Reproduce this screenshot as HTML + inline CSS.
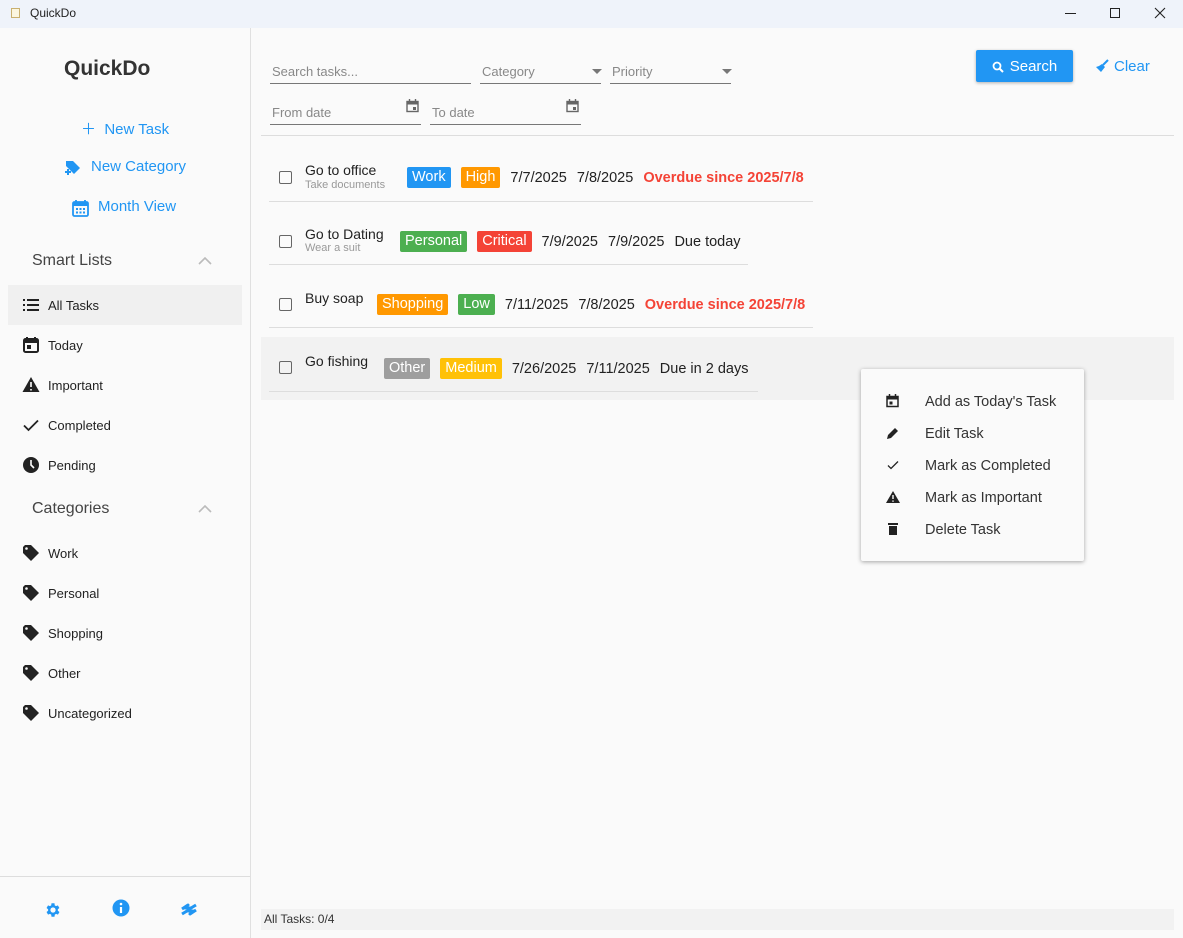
<!DOCTYPE html>
<html><head><meta charset="utf-8"><style>
*{box-sizing:border-box;margin:0;padding:0}
body{width:1183px;height:938px;overflow:hidden;background:#fafafa;font-family:"Liberation Sans","Noto Sans CJK SC",sans-serif;color:#222;position:relative}
.abs{position:absolute}
.tb{left:0;top:0;width:1183px;height:28px;background:#eff3fa}
.side{left:0;top:28px;width:251px;height:910px;border-right:1px solid #e0e0e0}
.blue{color:#2196f3}
.nav{font-size:13px;display:flex;align-items:center;gap:8px;left:22px;color:#222}
.nav svg{width:18px;height:18px}
.sec{font-size:16px;color:#444;left:32px}
.chev{left:198px;width:14px;height:8px}
.field{border-bottom:1px solid #777;font-size:13px;color:#888;height:20px;padding-left:2px}
.tag{display:inline-block;color:#fff;font-size:14.5px;padding:1px 5px;border-radius:2px;line-height:19px}
.row{font-size:14.5px;display:flex;align-items:center}
.cb{width:13px;height:13px;border:1.5px solid #666;border-radius:2px}
.menu{left:861px;top:369px;width:223px;height:192px;background:#fafafa;box-shadow:0 1px 4px rgba(0,0,0,.35);border-radius:2px}
.mi{position:absolute;left:64px;font-size:14.5px;color:#333}
.mic{position:absolute;left:25px;width:14px;height:14px}
</style></head><body>
<div class="abs tb">
 <div class="abs" style="left:11px;top:8px;width:9px;height:10px;border:1px solid #c9b070;background:#fbf6e0"></div>
 <div class="abs" style="left:30px;top:6px;font-size:12px">QuickDo</div>
 <div class="abs" style="left:1065px;top:13px;width:11px;height:1px;background:#222"></div>
 <div class="abs" style="left:1110px;top:8px;width:10px;height:10px;border:1px solid #222"></div>
 <svg class="abs" style="left:1154px;top:7px" width="12" height="12"><path d="M1 1L11 11M11 1L1 11" stroke="#222" stroke-width="1.1"/></svg>
</div>
<div class="abs side"></div>
<div class="abs" style="left:64px;top:57px;font-size:21px;font-weight:bold;color:#333">QuickDo</div>
<div class="abs blue" style="left:81px;top:118px;font-size:15px">＋&nbsp; New Task</div>
<svg class="abs" style="left:64px;top:159px" width="18" height="18"><path d="M2 2h7l7 7-6 6-8-8z" fill="#2196f3"/><path d="M1 13h6M4 10v6" stroke="#2196f3" stroke-width="2"/></svg>
<div class="abs blue" style="left:91px;top:158px;font-size:15px">New Category</div>
<svg class="abs" style="left:72px;top:199px" width="17" height="18"><rect x="1" y="3" width="15" height="14" rx="1.5" fill="none" stroke="#2196f3" stroke-width="1.8"/><rect x="1" y="3" width="15" height="4" fill="#2196f3"/><path d="M4 1v4M13 1v4" stroke="#2196f3" stroke-width="1.8"/><g fill="#2196f3"><rect x="4" y="9" width="2" height="2"/><rect x="7.5" y="9" width="2" height="2"/><rect x="11" y="9" width="2" height="2"/><rect x="4" y="12.5" width="2" height="2"/><rect x="7.5" y="12.5" width="2" height="2"/><rect x="11" y="12.5" width="2" height="2"/></g></svg>
<div class="abs blue" style="left:98px;top:198px;font-size:15px">Month View</div>
<div class="abs sec" style="top:252px">Smart Lists</div>
<svg class="abs chev" style="top:257px"><path d="M1 7L7 1L13 7" stroke="#bbb" stroke-width="1.6" fill="none"/></svg>
<div class="abs" style="left:8px;top:285px;width:234px;height:40px;background:#f0f0f0"></div>
<div class="abs nav" style="top:296px"><svg viewBox="0 0 18 18"><g fill="#222"><rect x="1" y="3" width="2" height="2"/><rect x="1" y="8" width="2" height="2"/><rect x="1" y="13" width="2" height="2"/><rect x="5" y="3" width="12" height="2"/><rect x="5" y="8" width="12" height="2"/><rect x="5" y="13" width="12" height="2"/></g></svg>All Tasks</div>
<div class="abs nav" style="top:336px"><svg viewBox="0 0 18 18"><rect x="2" y="3" width="14" height="13" rx="1.5" fill="none" stroke="#222" stroke-width="2"/><rect x="2" y="3" width="14" height="4" fill="#222"/><path d="M5 1v3M13 1v3" stroke="#222" stroke-width="2"/><rect x="5" y="9" width="4" height="4" fill="#222"/></svg>Today</div>
<div class="abs nav" style="top:376px"><svg viewBox="0 0 18 18"><path d="M9 1L17.5 16H.5z" fill="#222"/><path d="M9 6v5M9 13v1.5" stroke="#fff" stroke-width="1.6"/></svg>Important</div>
<div class="abs nav" style="top:416px"><svg viewBox="0 0 18 18"><path d="M2 9.5l4.5 4.5L16 4.5" stroke="#222" stroke-width="1.8" fill="none"/></svg>Completed</div>
<div class="abs nav" style="top:456px"><svg viewBox="0 0 18 18"><circle cx="9" cy="9" r="8" fill="#222"/><path d="M9 4v5l3 3" stroke="#fff" stroke-width="1.6" fill="none"/></svg>Pending</div>
<div class="abs sec" style="top:500px">Categories</div>
<svg class="abs chev" style="top:505px"><path d="M1 7L7 1L13 7" stroke="#bbb" stroke-width="1.6" fill="none"/></svg>
<div class="abs nav" style="top:544px"><svg viewBox="0 0 18 18"><path d="M1 3v6l8 8 8-8-8-8H3z" fill="#222"/><circle cx="4.5" cy="4.5" r="1.3" fill="#fafafa"/></svg>Work</div>
<div class="abs nav" style="top:584px"><svg viewBox="0 0 18 18"><path d="M1 3v6l8 8 8-8-8-8H3z" fill="#222"/><circle cx="4.5" cy="4.5" r="1.3" fill="#fafafa"/></svg>Personal</div>
<div class="abs nav" style="top:624px"><svg viewBox="0 0 18 18"><path d="M1 3v6l8 8 8-8-8-8H3z" fill="#222"/><circle cx="4.5" cy="4.5" r="1.3" fill="#fafafa"/></svg>Shopping</div>
<div class="abs nav" style="top:664px"><svg viewBox="0 0 18 18"><path d="M1 3v6l8 8 8-8-8-8H3z" fill="#222"/><circle cx="4.5" cy="4.5" r="1.3" fill="#fafafa"/></svg>Other</div>
<div class="abs nav" style="top:704px"><svg viewBox="0 0 18 18"><path d="M1 3v6l8 8 8-8-8-8H3z" fill="#222"/><circle cx="4.5" cy="4.5" r="1.3" fill="#fafafa"/></svg>Uncategorized</div>
<div class="abs" style="left:0;top:876px;width:250px;height:1px;background:#ddd"></div>
<svg class="abs" style="left:44px;top:901px" width="18" height="18" viewBox="0 0 24 24"><path fill="#2196f3" d="M19.4 13a7.5 7.5 0 000-2l2.1-1.6-2-3.5-2.5 1a7 7 0 00-1.7-1L15 3h-4l-.4 2.9a7 7 0 00-1.7 1l-2.5-1-2 3.5L6.5 11a7.5 7.5 0 000 2l-2.1 1.6 2 3.5 2.5-1a7 7 0 001.7 1L11 21h4l.4-2.9a7 7 0 001.7-1l2.5 1 2-3.5zM13 15.5a3.5 3.5 0 110-7 3.5 3.5 0 010 7z" transform="translate(-1 0)"/></svg>
<svg class="abs" style="left:112px;top:899px" width="18" height="18"><circle cx="9" cy="9" r="8.5" fill="#2196f3"/><path d="M9 8v6" stroke="#fff" stroke-width="2.2"/><circle cx="9" cy="5" r="1.3" fill="#fff"/></svg>
<svg class="abs" style="left:180px;top:901px" width="18" height="18"><path d="M2 13l5-3h6l-3 3 6-4M16 4l-5 3H5l3-3-6 4" stroke="#2196f3" stroke-width="3" fill="none" stroke-linejoin="round"/></svg>

<div class="abs field" style="left:270px;top:64px;width:201px">Search tasks...</div>
<div class="abs field" style="left:480px;top:64px;width:121px">Category</div>
<svg class="abs" style="left:592px;top:69px" width="10" height="6"><path d="M0 0h10L5 5z" fill="#777"/></svg>
<div class="abs field" style="left:610px;top:64px;width:121px">Priority</div>
<svg class="abs" style="left:722px;top:69px" width="10" height="6"><path d="M0 0h10L5 5z" fill="#777"/></svg>
<div class="abs field" style="left:270px;top:105px;width:151px">From date</div>
<div class="abs field" style="left:430px;top:105px;width:151px">To date</div>
<svg class="abs" style="left:406px;top:99px" width="13" height="14"><rect x="1" y="2.5" width="11" height="10" fill="none" stroke="#666" stroke-width="1.4"/><rect x="1" y="2.5" width="11" height="3" fill="#666"/><rect x="7" y="8" width="3" height="3" fill="#666"/><path d="M3.5 0v3M9.5 0v3" stroke="#666" stroke-width="1.4"/></svg>
<svg class="abs" style="left:566px;top:99px" width="13" height="14"><rect x="1" y="2.5" width="11" height="10" fill="none" stroke="#666" stroke-width="1.4"/><rect x="1" y="2.5" width="11" height="3" fill="#666"/><rect x="7" y="8" width="3" height="3" fill="#666"/><path d="M3.5 0v3M9.5 0v3" stroke="#666" stroke-width="1.4"/></svg>
<div class="abs" style="left:976px;top:50px;width:97px;height:32px;background:#2196f3;border-radius:2px;box-shadow:0 1px 3px rgba(0,0,0,.3);color:#fff;font-size:15px;display:flex;align-items:center;justify-content:center;gap:6px;padding-top:1px"><svg width="12" height="12"><circle cx="5" cy="5" r="3.5" stroke="#fff" stroke-width="1.8" fill="none"/><path d="M7.5 7.5L11 11" stroke="#fff" stroke-width="2"/></svg>Search</div>
<svg class="abs" style="left:1095px;top:59px" width="14" height="14"><path d="M13 1L8 6" stroke="#2196f3" stroke-width="2"/><path d="M7 5l3 3-4 5-5-5 3-1z" fill="#2196f3"/></svg>
<div class="abs blue" style="left:1114px;top:58px;font-size:15px">Clear</div>
<div class="abs" style="left:261px;top:135px;width:913px;height:1px;background:#ddd"></div>

<div class="abs" style="left:261px;top:337px;width:913px;height:63px;background:#f2f2f2"></div>

<div class="abs cb" style="left:279px;top:171px"></div>
<div class="abs" style="left:305px;top:162px;font-size:14px">Go to office</div>
<div class="abs" style="left:305px;top:179px;font-size:11px;color:#999">Take documents</div>
<div class="abs row" style="left:407px;top:167px"><span class="tag" style="background:#2196f3">Work</span><span class="tag" style="background:#ff9800;margin-left:10px">High</span><span style="margin-left:10px">7/7/2025</span><span style="margin-left:10px">7/8/2025</span><span style="margin-left:10px;color:#f44336;font-weight:bold">Overdue since 2025/7/8</span></div>
<div class="abs" style="left:269px;top:201px;width:544px;height:1px;background:#ddd"></div>

<div class="abs cb" style="left:279px;top:235px"></div>
<div class="abs" style="left:305px;top:226px;font-size:14px">Go to Dating</div>
<div class="abs" style="left:305px;top:242px;font-size:11px;color:#999">Wear a suit</div>
<div class="abs row" style="left:400px;top:231px"><span class="tag" style="background:#4caf50">Personal</span><span class="tag" style="background:#f44336;margin-left:10px">Critical</span><span style="margin-left:10px">7/9/2025</span><span style="margin-left:10px">7/9/2025</span><span style="margin-left:10px">Due today</span></div>
<div class="abs" style="left:269px;top:264px;width:479px;height:1px;background:#ddd"></div>

<div class="abs cb" style="left:279px;top:298px"></div>
<div class="abs" style="left:305px;top:290px;font-size:14px">Buy soap</div>
<div class="abs row" style="left:377px;top:294px"><span class="tag" style="background:#ff9800">Shopping</span><span class="tag" style="background:#4caf50;margin-left:10px">Low</span><span style="margin-left:10px">7/11/2025</span><span style="margin-left:10px">7/8/2025</span><span style="margin-left:10px;color:#f44336;font-weight:bold">Overdue since 2025/7/8</span></div>
<div class="abs" style="left:269px;top:327px;width:544px;height:1px;background:#ddd"></div>

<div class="abs cb" style="left:279px;top:361px"></div>
<div class="abs" style="left:305px;top:353px;font-size:14px">Go fishing</div>
<div class="abs row" style="left:384px;top:358px"><span class="tag" style="background:#9e9e9e">Other</span><span class="tag" style="background:#ffc107;margin-left:10px">Medium</span><span style="margin-left:10px">7/26/2025</span><span style="margin-left:10px">7/11/2025</span><span style="margin-left:10px">Due in 2 days</span></div>
<div class="abs" style="left:269px;top:391px;width:489px;height:1px;background:#ddd"></div>

<div class="abs menu">
 <svg class="mic" style="top:25px"><rect x="1" y="2.5" width="11" height="10" fill="none" stroke="#222" stroke-width="1.5"/><rect x="1" y="2.5" width="11" height="3" fill="#222"/><rect x="3.5" y="7.5" width="3" height="3" fill="#222"/><path d="M3.5 0v3M9.5 0v3" stroke="#222" stroke-width="1.5"/></svg>
 <div class="mi" style="top:25px">Add as Today's Task</div>
 <svg class="mic" style="top:57px"><path d="M1 13l1-4 7-7 3 3-7 7z" fill="#222"/></svg>
 <div class="mi" style="top:57px">Edit Task</div>
 <svg class="mic" style="top:89px"><path d="M2 7.5l3 3L12 3.5" stroke="#222" stroke-width="1.3" fill="none"/></svg>
 <div class="mi" style="top:89px">Mark as Completed</div>
 <svg class="mic" style="top:121px"><path d="M7 1L14 13H0z" fill="#222"/><path d="M7 5v4M7 10.5v1.2" stroke="#fff" stroke-width="1.4"/></svg>
 <div class="mi" style="top:121px">Mark as Important</div>
 <svg class="mic" style="top:153px"><rect x="2" y="1" width="10" height="2" fill="#222"/><path d="M3 4h8v9H3z" fill="#222"/></svg>
 <div class="mi" style="top:153px">Delete Task</div>
</div>

<div class="abs" style="left:261px;top:909px;width:913px;height:21px;background:#f2f2f2;font-size:12px;padding:3px 3px;color:#333">All Tasks: 0/4</div>
</body></html>
